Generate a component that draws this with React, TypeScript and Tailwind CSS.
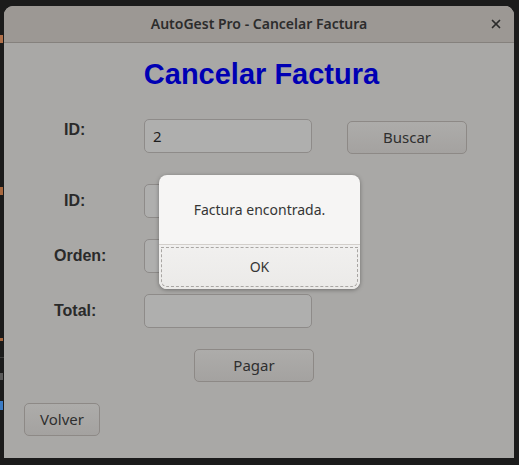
import { X } from 'lucide-react'

const rows = [
  { label: 'ID:', pad: 'pl-[60px]', labelTop: 'mt-[3px]', value: '2', gap: 'mt-[30px]', search: true },
  { label: 'ID:', pad: 'pl-[60px]', labelTop: 'mt-[9px]', value: '', gap: 'mt-[30px]', search: false },
  { label: 'Orden:', pad: 'pl-[50px]', labelTop: 'mt-[9px]', value: '', gap: 'mt-[21px]', search: false },
  { label: 'Total:', pad: 'pl-[50px]', labelTop: 'mt-[9px]', value: '', gap: 'mt-[21px]', search: false },
]

const btn =
  'h-[33px] rounded-[5px] border border-[#8d8986] bg-gradient-to-b from-[#adacaa] to-[#a4a2a0] text-[15px] text-[#2f2f2f] font-["Noto_Sans",sans-serif] flex items-center justify-center'

const App = () => {
  return (
    <div className="relative w-[519px] h-[465px] bg-[#1b1b1b] pl-[4px] pt-[6px] overflow-hidden">
      {/* bits of the desktop behind the window */}
      <span className="absolute left-0 top-[35px] w-[3px] h-[8px] bg-[#b0704a]" />
      <span className="absolute left-0 top-[187px] w-[3px] h-[8px] bg-[#a8683f]" />
      <span className="absolute left-0 top-[338px] w-[3px] h-[3px] bg-[#a8683f]" />
      <span className="absolute left-0 top-[357px] w-[4px] h-px bg-[#3a3a3a]" />
      <span className="absolute left-0 top-[373px] w-[3px] h-[7px] bg-[#5a5a5a]" />
      <span className="absolute left-0 top-[401px] w-[3px] h-[9px] bg-[#3b7bc4]" />

      <div className="w-[510px] h-[452px] rounded-t-[9px] overflow-hidden bg-[#a9a8a6] flex flex-col">
        <div className="relative h-[37px] shrink-0 bg-[#9c9894] border-b border-[#85817d] flex items-center justify-center">
          <span className="text-[14px] font-semibold text-[#2c2c2c] font-['Noto_Sans',sans-serif] -mt-px">
            AutoGest Pro - Cancelar Factura
          </span>
          <X className="absolute right-[11px] top-[11px] text-[#2c2c2c]" size={14} strokeWidth={3} />
        </div>

        <div className="relative flex-1 flex flex-col pt-[16px]">
          <h1 className="text-center pl-[5px] leading-[30px] text-[29px] font-bold text-[#0000b4] font-['Liberation_Sans',Arial,sans-serif]">
            Cancelar Factura
          </h1>

          {rows.map((row, i) => (
            <div key={i} className={`flex items-start ${row.gap}`}>
              <div className={`w-[140px] ${row.pad}`}>
                <span
                  className={`block ${row.labelTop} leading-none text-[16px] font-bold text-[#2a2a2a] font-['Liberation_Sans',Arial,sans-serif]`}
                >
                  {row.label}
                </span>
              </div>
              <div className="w-[168px] h-[34px] rounded-[5px] border border-[#8e8b89] bg-[#afafae] px-[8px] flex items-center text-[15px] text-[#1e1e1e] font-['Noto_Sans',sans-serif]">
                {row.value}
              </div>
              {row.search && <div className={`${btn} ml-[35px] mt-[2px] w-[120px]`}>Buscar</div>}
            </div>
          ))}

          <div className="flex mt-[21px] pl-[190px]">
            <div className={`${btn} w-[120px]`}>Pagar</div>
          </div>

          <div className="flex mt-[21px] pl-[20px]">
            <div className={`${btn} w-[76px]`}>Volver</div>
          </div>

          <div className="absolute left-[155px] top-[132px] w-[201px] h-[114px] rounded-[8px] bg-[#f6f5f4] shadow-[0_1px_4px_rgba(0,0,0,0.35)] flex flex-col overflow-hidden font-['Noto_Sans',sans-serif]">
            <div className="flex-1 flex items-center justify-center text-[14px] text-[#353535] pb-px">
              Factura encontrada.
            </div>
            <div className="h-[45px] border-t border-[#d3cfcb] bg-gradient-to-b from-[#f1f0ef] to-[#ebeae8] p-[2px]">
              <div className="w-full h-full rounded-b-[6px] border border-dashed border-[#a9a6a3] flex items-center justify-center text-[14px] text-[#353535] pb-[2px]">
                OK
              </div>
            </div>
          </div>
        </div>
      </div>
    </div>
  )
}

export default App
